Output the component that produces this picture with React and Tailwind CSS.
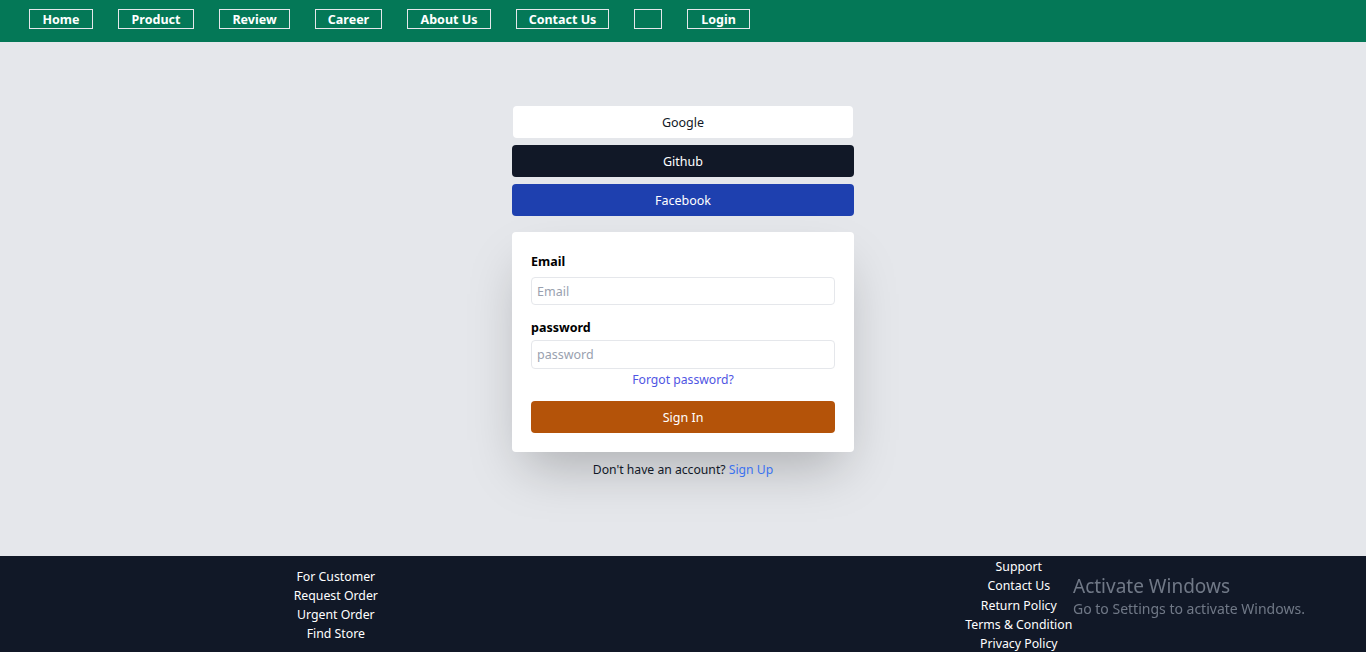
import React from "react";

const navItems = [
  { label: "Home", w: "w-[64px]" },
  { label: "Product", w: "w-[76px]" },
  { label: "Review", w: "w-[71px]" },
  { label: "Career", w: "w-[67px]" },
  { label: "About Us", w: "w-[84px]" },
  { label: "Contact Us", w: "w-[93px]" },
  { label: "", w: "w-[28px]" },
  { label: "Login", w: "w-[63px]" },
];

export default function App() {
  return (
    <div className="min-h-screen bg-[#e5e7eb] font-['Noto_Sans','Open_Sans',sans-serif]">
      <nav className="h-[42px] bg-[#047857] flex items-start pt-[9px] pl-[29px] gap-[25px]">
        {navItems.map((n, i) => (
          <a
            key={i}
            className={`${n.w} h-[20px] border border-gray-200 flex items-center justify-center pt-[2px] text-white text-[12.5px] font-bold leading-none`}
          >
            {n.label}
          </a>
        ))}
      </nav>

      <main className="flex flex-col items-center pt-16 pb-[76px]">
        <button className="w-[340px] h-8 pt-[2px] bg-white rounded-sm text-[12.5px] text-[#111827]">
          Google
        </button>
        <button className="w-[342px] h-8 pt-[3px] mt-[7px] bg-[#111827] rounded text-[12.5px] text-white">
          Github
        </button>
        <button className="w-[342px] h-8 pt-[2px] mt-[7px] bg-[#1e40af] rounded text-[12.5px] text-white">
          Facebook
        </button>

        <div className="w-[342px] mt-4 bg-white rounded shadow-2xl pl-[19px] pr-[19px] pt-5 pb-[19px]">
          <label className="block font-bold text-black text-[12.5px] leading-5">Email</label>
          <input
            placeholder="Email"
            className="block w-full h-7 mt-[5px] px-[5px] border border-gray-200 rounded text-[12.5px] placeholder:text-gray-400 outline-none"
          />
          <label className="block font-bold text-black text-[12.5px] leading-5 mt-[13px]">password</label>
          <input
            placeholder="password"
            className="block w-full h-[29px] mt-[2px] px-[5px] border border-gray-200 rounded text-[12.5px] placeholder:text-gray-400 outline-none"
          />
          <p className="text-center text-[12.2px] text-[#4f55e3] leading-5 mt-[1px]">Forgot password?</p>
          <button className="w-full h-8 pt-[3px] mt-[11px] bg-[#b45309] rounded text-white text-[12.5px]">
            Sign In
          </button>
        </div>

        <p className="mt-2 text-[12.2px] leading-5 text-[#111827]">
          Don't have an account? <span className="text-[#3b72ef]">Sign Up</span>
        </p>
      </main>

      <footer className="bg-[#111827] flex justify-around items-center text-white text-[12.3px] leading-[19.25px] pt-[1px]">
        <ul className="flex flex-col items-center">
          <li>For Customer</li>
          <li>Request Order</li>
          <li>Urgent Order</li>
          <li>Find Store</li>
        </ul>
        <ul className="flex flex-col items-center">
          <li>Support</li>
          <li>Contact Us</li>
          <li>Return Policy</li>
          <li>Terms &amp; Condition</li>
          <li>Privacy Policy</li>
        </ul>
      </footer>

      <div className="fixed left-[1073px] top-[574px] text-gray-400/70 pointer-events-none">
        <div className="text-[19px] leading-6">Activate Windows</div>
        <div className="text-[14px] leading-5 mt-[1px]">Go to Settings to activate Windows.</div>
      </div>
    </div>
  );
}
